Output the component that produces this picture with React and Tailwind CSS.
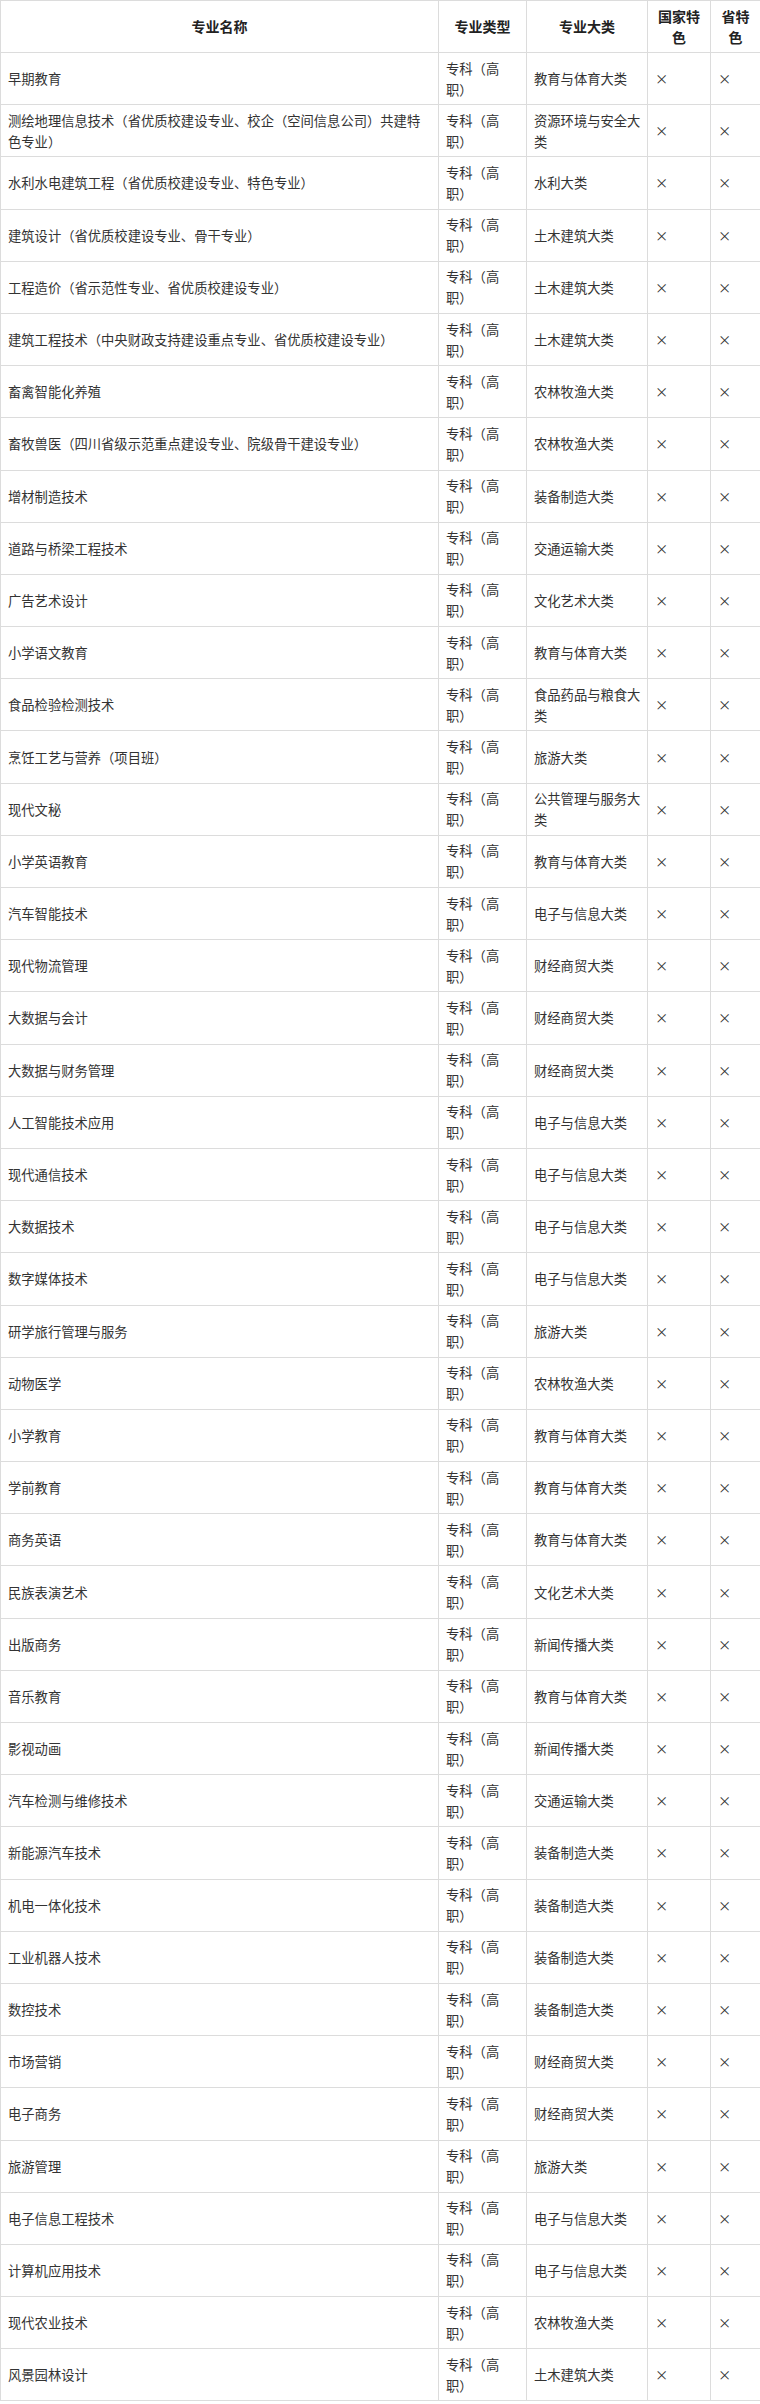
import React from 'react';

const ROWS = [
    ['早期教育', '教育与体育大类'],
    ['测绘地理信息技术（省优质校建设专业、校企（空间信息公司）共建特色专业）', '资源环境与安全大类'],
    ['水利水电建筑工程（省优质校建设专业、特色专业）', '水利大类'],
    ['建筑设计（省优质校建设专业、骨干专业）', '土木建筑大类'],
    ['工程造价（省示范性专业、省优质校建设专业）', '土木建筑大类'],
    ['建筑工程技术（中央财政支持建设重点专业、省优质校建设专业）', '土木建筑大类'],
    ['畜禽智能化养殖', '农林牧渔大类'],
    ['畜牧兽医（四川省级示范重点建设专业、院级骨干建设专业）', '农林牧渔大类'],
    ['增材制造技术', '装备制造大类'],
    ['道路与桥梁工程技术', '交通运输大类'],
    ['广告艺术设计', '文化艺术大类'],
    ['小学语文教育', '教育与体育大类'],
    ['食品检验检测技术', '食品药品与粮食大类'],
    ['烹饪工艺与营养（项目班）', '旅游大类'],
    ['现代文秘', '公共管理与服务大类'],
    ['小学英语教育', '教育与体育大类'],
    ['汽车智能技术', '电子与信息大类'],
    ['现代物流管理', '财经商贸大类'],
    ['大数据与会计', '财经商贸大类'],
    ['大数据与财务管理', '财经商贸大类'],
    ['人工智能技术应用', '电子与信息大类'],
    ['现代通信技术', '电子与信息大类'],
    ['大数据技术', '电子与信息大类'],
    ['数字媒体技术', '电子与信息大类'],
    ['研学旅行管理与服务', '旅游大类'],
    ['动物医学', '农林牧渔大类'],
    ['小学教育', '教育与体育大类'],
    ['学前教育', '教育与体育大类'],
    ['商务英语', '教育与体育大类'],
    ['民族表演艺术', '文化艺术大类'],
    ['出版商务', '新闻传播大类'],
    ['音乐教育', '教育与体育大类'],
    ['影视动画', '新闻传播大类'],
    ['汽车检测与维修技术', '交通运输大类'],
    ['新能源汽车技术', '装备制造大类'],
    ['机电一体化技术', '装备制造大类'],
    ['工业机器人技术', '装备制造大类'],
    ['数控技术', '装备制造大类'],
    ['市场营销', '财经商贸大类'],
    ['电子商务', '财经商贸大类'],
    ['旅游管理', '旅游大类'],
    ['电子信息工程技术', '电子与信息大类'],
    ['计算机应用技术', '电子与信息大类'],
    ['现代农业技术', '农林牧渔大类'],
    ['风景园林设计', '土木建筑大类'],
];

const th = 'border border-[#dcdcdc] px-[7px] py-[4.5px] text-center font-bold text-[14px] leading-[21px] text-[#222]';
const td = 'border border-[#dcdcdc] px-[7px] py-[4.6px] align-middle text-[13.3px] leading-[21px] text-[#333]';

export default function App() {
    return (
        <div className="w-[760px] bg-white font-['Noto_Sans_CJK_SC',sans-serif]">
            <table className="w-[760px] table-fixed border-collapse">
                <colgroup>
                    <col className="w-[438px]" />
                    <col className="w-[88px]" />
                    <col className="w-[121px]" />
                    <col className="w-[63px]" />
                    <col className="w-[50px]" />
                </colgroup>
                <thead>
                    <tr>
                        <th className={th}>专业名称</th>
                        <th className={th}>专业类型</th>
                        <th className={th}>专业大类</th>
                        <th className={th}>国家特色</th>
                        <th className={th}>省特色</th>
                    </tr>
                </thead>
                <tbody>
                    {ROWS.map(([name, cat]) => (
                        <tr key={name}>
                            <td className={td}>{name}</td>
                            <td className={td}>专科（高职）</td>
                            <td className={td + ' pr-[4px]'}>{cat}</td>
                            <td className={td + ' text-[12px]'}>×</td>
                            <td className={td + ' text-[12px]'}>×</td>
                        </tr>
                    ))}
                </tbody>
            </table>
        </div>
    );
}
